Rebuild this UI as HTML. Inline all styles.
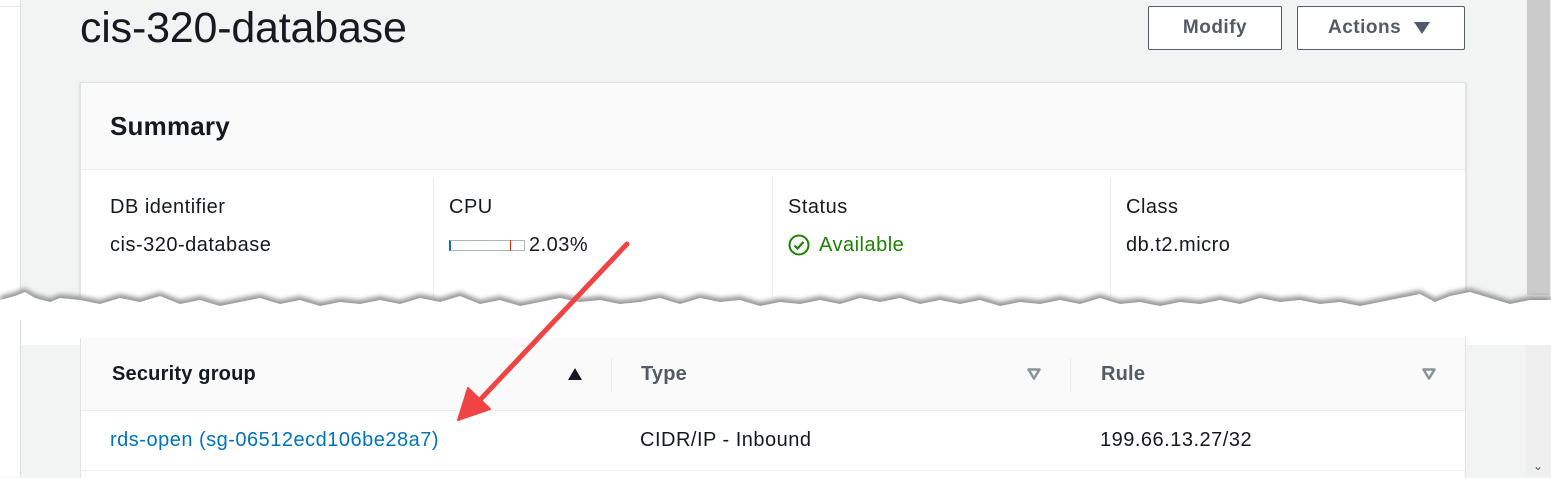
<!DOCTYPE html>
<html><head><style>
body{margin:0;width:1551px;height:477px;overflow:hidden;background:#f2f3f3;font-family:"Liberation Sans",sans-serif;position:relative;color:#16191f}
.a{position:absolute}
.t{font-size:20px;letter-spacing:0.5px}
</style></head><body>
<div class="a" style="left:0;top:0;width:20px;height:477px;background:#fff;border-right:1px solid #d5dbdb"></div>
<div class="a" style="left:0;top:6px;width:20px;height:1px;background:#e5e5e5"></div>
<div class="a" style="left:1526px;top:0;width:25px;height:477px;background:#efefef"></div>
<div class="a" style="left:1527px;top:0;width:23px;height:295px;background:#cbcbcb"></div>
<div class="a" style="left:1533px;top:459px;font-size:12px;color:#555">&#8964;</div>
<div class="a" style="left:80px;top:4px;font-size:43px;letter-spacing:-0.2px;color:#16191f">cis-320-database</div>
<div class="a" style="left:1148px;top:6px;width:132px;height:42px;border:1px solid #545b64;border-radius:2px;background:#fff;text-align:center;line-height:42px;font-weight:bold;font-size:19px;color:#545b64;letter-spacing:0.5px">Modify</div>
<div class="a" style="left:1297px;top:6px;width:166px;height:42px;border:1px solid #545b64;border-radius:2px;background:#fff;line-height:42px;font-weight:bold;font-size:19px;color:#545b64;letter-spacing:0.5px"><span style="margin-left:30px">Actions</span><svg style="position:absolute;left:116px;top:15px" width="16" height="13"><path d="M0 0H16L8 12Z" fill="#545b64"/></svg></div>
<!-- summary panel -->
<div class="a" style="left:80px;top:82px;width:1384px;height:230px;background:#fff;border:1px solid #e0e3e3;box-shadow:0 1px 2px rgba(0,0,0,.2)">
 <div style="height:86px;background:#fafafa;border-bottom:1px solid #eaeded"></div>
</div>
<div class="a" style="left:110px;top:111px;font-size:26px;font-weight:bold;letter-spacing:0.2px">Summary</div>
<div class="a" style="left:433px;top:177px;width:1px;height:120px;background:#eaeded"></div>
<div class="a" style="left:772px;top:177px;width:1px;height:120px;background:#eaeded"></div>
<div class="a" style="left:1110px;top:177px;width:1px;height:120px;background:#eaeded"></div>
<div class="a t" style="left:110px;top:196px">DB identifier</div>
<div class="a t" style="left:110px;top:234px">cis-320-database</div>
<div class="a t" style="left:449px;top:196px">CPU</div>
<div class="a" style="left:449px;top:240px;width:73px;height:9px;border:1px solid #aab7b8;border-left:2px solid #0073bb;background:#fff"></div>
<div class="a" style="left:510px;top:240px;width:1px;height:11px;background:#d13212"></div>
<div class="a t" style="left:529px;top:234px">2.03%</div>
<div class="a t" style="left:788px;top:196px">Status</div>
<svg class="a" style="left:788px;top:234px" width="24" height="24"><circle cx="11" cy="11" r="9.5" fill="none" stroke="#1d8102" stroke-width="2"/><path d="M6.5 11.5l3 3 6-6.5" fill="none" stroke="#1d8102" stroke-width="2.2"/></svg>
<div class="a t" style="left:819px;top:234px;color:#1d8102">Available</div>
<div class="a t" style="left:1126px;top:196px">Class</div>
<div class="a t" style="left:1126px;top:234px">db.t2.micro</div>
<!-- torn band -->
<svg class="a" style="left:0;top:280px" width="1551" height="65">
<defs><filter id="s"><feGaussianBlur stdDeviation="2.5"/></filter></defs>
<path d="M0 16 L15 12 L25 8 L35 14 L50 18 L60 14 L80 16 L100 20 L120 14 L140 18 L160 12 L180 20 L200 16 L220 22 L240 18 L260 14 L280 20 L300 16 L320 22 L340 18 L360 20 L380 16 L400 20 L420 14 L440 18 L460 12 L480 20 L500 16 L520 22 L540 18 L560 14 L580 18 L600 16 L620 20 L640 18 L660 14 L680 20 L700 14 L720 18 L740 16 L760 22 L780 18 L800 20 L820 16 L840 20 L860 14 L880 18 L900 14 L920 20 L940 16 L960 20 L980 16 L1000 22 L1020 18 L1040 20 L1060 16 L1080 20 L1100 14 L1120 20 L1140 18 L1160 22 L1180 18 L1200 20 L1220 16 L1240 20 L1260 14 L1280 18 L1300 16 L1320 20 L1340 18 L1360 22 L1380 18 L1400 14 L1420 10 L1435 18 L1450 12 L1470 8 L1490 14 L1510 20 L1530 16 L1551 16 L1551 65 L0 65Z" fill="#999" filter="url(#s)"/>
<path d="M0 20 L15 16 L25 12 L35 18 L50 22 L60 18 L80 20 L100 24 L120 18 L140 22 L160 16 L180 24 L200 20 L220 26 L240 22 L260 18 L280 24 L300 20 L320 26 L340 22 L360 24 L380 20 L400 24 L420 18 L440 22 L460 16 L480 24 L500 20 L520 26 L540 22 L560 18 L580 22 L600 20 L620 24 L640 22 L660 18 L680 24 L700 18 L720 22 L740 20 L760 26 L780 22 L800 24 L820 20 L840 24 L860 18 L880 22 L900 18 L920 24 L940 20 L960 24 L980 20 L1000 26 L1020 22 L1040 24 L1060 20 L1080 24 L1100 18 L1120 24 L1140 22 L1160 26 L1180 22 L1200 24 L1220 20 L1240 24 L1260 18 L1280 22 L1300 20 L1320 24 L1340 22 L1360 26 L1380 22 L1400 18 L1420 14 L1435 22 L1450 16 L1470 12 L1490 18 L1510 24 L1530 20 L1551 20 L1551 65 L0 65Z" fill="#fff"/>
</svg>
<div class="a" style="left:0;top:320px;width:1551px;height:18px;background:#fff"></div>
<div class="a" style="left:0;top:320px;width:20px;height:157px;background:#fff;border-right:1px solid #d5dbdb"></div>
<!-- table -->
<div class="a" style="left:80px;top:338px;width:1384px;height:140px;background:#fff;border-left:1px solid #e0e3e3;border-right:1px solid #e0e3e3">
 <div style="height:72px;background:#fafafa;border-bottom:1px solid #eaeded"></div>
 <div style="height:59px;border-bottom:1px solid #eaeded"></div>
</div>
<div class="a" style="left:611px;top:358px;width:1px;height:34px;background:#eaeded"></div>
<div class="a" style="left:1070px;top:358px;width:1px;height:34px;background:#eaeded"></div>
<div class="a t" style="left:112px;top:363px;font-weight:bold;letter-spacing:0.2px">Security group</div>
<svg class="a" style="left:568px;top:368px" width="14" height="12"><path d="M7 0L14 12H0Z" fill="#16191f"/></svg>
<div class="a t" style="left:641px;top:363px;font-weight:bold;color:#545b64;letter-spacing:0.2px">Type</div>
<svg class="a" style="left:1027px;top:368px" width="14" height="12"><path d="M1.5 1.5H12.5L7 10.5Z" fill="none" stroke="#879596" stroke-width="2.5" stroke-linejoin="round"/></svg>
<div class="a t" style="left:1101px;top:363px;font-weight:bold;color:#545b64;letter-spacing:0.2px">Rule</div>
<svg class="a" style="left:1422px;top:368px" width="14" height="12"><path d="M1.5 1.5H12.5L7 10.5Z" fill="none" stroke="#879596" stroke-width="2.5" stroke-linejoin="round"/></svg>
<div class="a t" style="left:110px;top:429px;color:#0073bb">rds-open (sg-06512ecd106be28a7)</div>
<div class="a t" style="left:640px;top:429px">CIDR/IP - Inbound</div>
<div class="a t" style="left:1100px;top:429px">199.66.13.27/32</div>
<!-- arrow -->
<svg class="a" style="left:0;top:0" width="1551" height="477">
<line x1="627" y1="244" x2="478" y2="402" stroke="#f04444" stroke-width="5" stroke-linecap="round"/>
<path d="M458 420 L468 388 L490 409Z" fill="#f04444" stroke="#f04444" stroke-width="2" stroke-linejoin="round"/>
</svg>
</body></html>
